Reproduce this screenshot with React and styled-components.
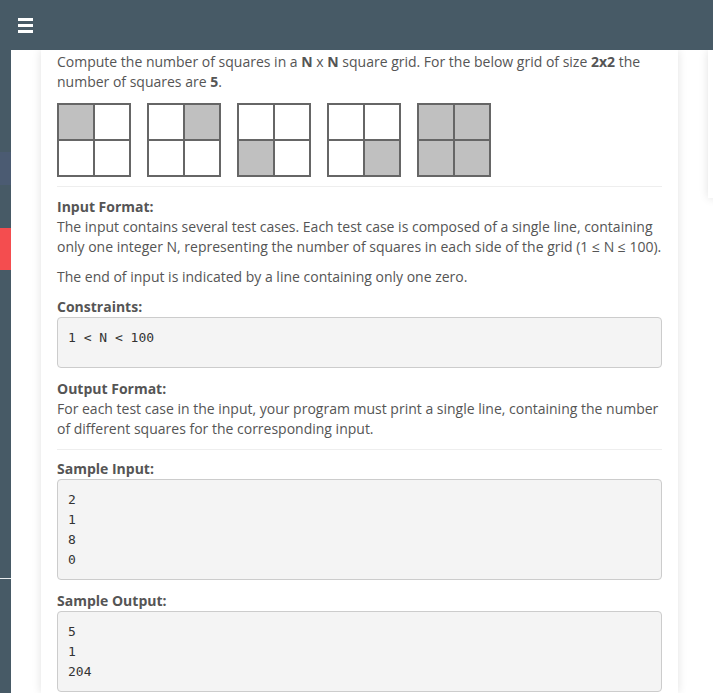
import React from 'react';
import styled, { createGlobalStyle } from 'styled-components';

const GlobalStyle = createGlobalStyle`
  html, body {
    margin: 0;
    padding: 0;
    background: #fff;
  }
  body {
    font-family: 'Open Sans', 'Liberation Sans', sans-serif;
    font-size: 14px;
    color: #555;
  }
`;

const Page = styled.div`
  position: relative;
  width: 713px;
  height: 693px;
  overflow: hidden;
  background: #fff;
`;

const TopBar = styled.header`
  height: 50px;
  background: #475a66;
  display: flex;
  align-items: center;
  padding-left: 18px;
  position: relative;
  z-index: 2;
`;

// hamburger
const Burger = styled.div`
  display: flex;
  flex-direction: column;
  gap: 3px;
  width: 15px;
`;

const BurgerBar = styled.span`
  display: block;
  height: 3px;
  background: #fff;
`;

const Body = styled.div`
  display: flex;
  height: 643px;
`;

const Sidebar = styled.aside`
  width: 11px;
  flex-shrink: 0;
  display: flex;
  flex-direction: column;
`;

const SideSeg = styled.div`
  height: ${(p) => p.$h}px;
  flex-shrink: 0;
  background: ${(p) => p.$color || '#475a66'};
  ${(p) => p.$grow && 'flex: 1;'}
`;

const Main = styled.main`
  flex: 1;
  display: flex;
  padding-left: 30px;
`;

const Card = styled.section`
  width: 637px;
  flex-shrink: 0;
  background: #fff;
  box-shadow: 0 0 9px rgba(0, 0, 0, 0.12);
  padding: 2px 16px 0;
  box-sizing: border-box;
`;

const Widget = styled.div`
  margin-left: 30px;
  width: 40px;
  height: 148px;
  background: #fff;
  box-shadow: 0 0 9px rgba(0, 0, 0, 0.12);
`;

const Text = styled.p`
  margin: 0 0 ${(p) => (p.$mb != null ? p.$mb : 10)}px;
  line-height: 20px;
`;

const Heading = styled.h4`
  margin: 0;
  font-size: 14px;
  line-height: 20px;
  font-weight: 700;
  color: #555;
`;

const Grids = styled.div`
  display: flex;
  gap: 16px;
  margin-top: 11px;
`;

const Square = styled.div`
  display: grid;
  grid-template-columns: 34px 34px;
  grid-template-rows: 34px 34px;
  gap: 2px;
  padding: 2px;
  background: #666;
  width: max-content;
`;

const Cell = styled.div`
  background: ${(p) => (p.$on ? '#c0c0c0' : '#fff')};
`;

const Rule = styled.hr`
  border: 0;
  border-top: 1px solid #eee;
  margin: ${(p) => p.$m || '9px 0 10px'};
`;

const Pre = styled.pre`
  margin: 0 0 11px;
  padding: 10px 10px ${(p) => p.$pb || 9}px;
  background: #f4f4f4;
  border: 1px solid #ccc;
  border-radius: 4px;
  font-family: 'DejaVu Sans Mono', 'Liberation Mono', monospace;
  font-size: 13px;
  line-height: 20px;
  color: #333;
  white-space: pre;
`;

const patterns = [
  [1, 0, 0, 0],
  [0, 1, 0, 0],
  [0, 0, 1, 0],
  [0, 0, 0, 1],
  [1, 1, 1, 1],
];

export default function App() {
  return (
    <Page>
      <GlobalStyle />
      <TopBar>
        <Burger>
          <BurgerBar />
          <BurgerBar />
          <BurgerBar />
        </Burger>
      </TopBar>
      <Body>
        <Sidebar>
          <SideSeg $h={102} />
          <SideSeg $h={33} $color="#4b5b72" />
          <SideSeg $h={43} />
          <SideSeg $h={42} $color="#f44d4f" />
          <SideSeg $h={308} />
          <SideSeg $h={1} $color="#e8ecee" />
          <SideSeg $grow />
        </Sidebar>
        <Main>
          <Card>
            <Text $mb={0}>
              Compute the number of squares in a <b>N</b> x <b>N</b> square grid. For the below grid of size <b>2x2</b> the
              number of squares are <b>5</b>.
            </Text>
            <Grids>
              {patterns.map((p, i) => (
                <Square key={i}>
                  {p.map((on, j) => (
                    <Cell key={j} $on={on} />
                  ))}
                </Square>
              ))}
            </Grids>
            <Rule />
            <Heading>Input Format:</Heading>
            <Text>
              The input contains several test cases. Each test case is composed of a single line, containing
              only one integer N, representing the number of squares in each side of the grid (1 ≤ N ≤ 100).
            </Text>
            <Text>The end of input is indicated by a line containing only one zero.</Text>
            <Heading>Constraints:</Heading>
            <Pre $pb={19}>1 &lt; N &lt; 100</Pre>
            <Heading>Output Format:</Heading>
            <Text>
              For each test case in the input, your program must print a single line, containing the number
              of different squares for the corresponding input.
            </Text>
            <Rule $m="0 0 9px" />
            <Heading>Sample Input:</Heading>
            <Pre>{'2\n1\n8\n0'}</Pre>
            <Heading>Sample Output:</Heading>
            <Pre>{'5\n1\n204'}</Pre>
          </Card>
          <Widget />
        </Main>
      </Body>
    </Page>
  );
}
